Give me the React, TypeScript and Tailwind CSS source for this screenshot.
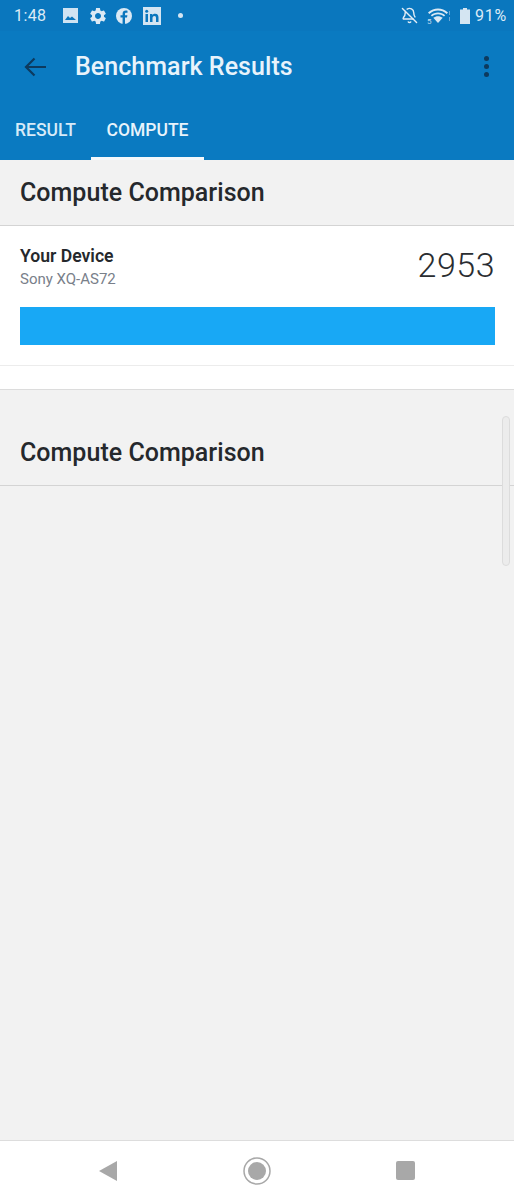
import React from "react";
import { BellOff } from "lucide-react";

const font = { fontFamily: "Roboto, sans-serif" };

function StatusIcons() {
  return (
    <div className="flex items-center">
      <svg width="15" height="15" viewBox="0 0 15 15" className="ml-[17px]" fill="#cfe3f2">
        <path d="M0 0h15v15H0z" />
        <path d="M2 12l3-4 2 2 2-1.500 4 3.500z" fill="#0a76bd" />
      </svg>
      <svg width="20" height="20" viewBox="0 0 24 24" className="ml-[10px]" fill="#dbe9f4">
        <path d="M19.140 12.940c.040-.300.060-.610.060-.940 0-.320-.020-.640-.070-.940l2.030-1.580a.490.490 0 00.120-.610l-1.920-3.320a.488.488 0 00-.590-.220l-2.390.960c-.500-.380-1.030-.700-1.620-.940l-.360-2.540a.484.484 0 00-.480-.410h-3.840c-.240 0-.430.170-.470.410l-.360 2.540c-.590.240-1.130.570-1.620.940l-2.390-.960c-.220-.080-.470 0-.590.220L2.740 8.870c-.120.210-.080.470.120.610l2.030 1.580c-.050.300-.090.630-.090.940s.020.640.070.940l-2.030 1.580a.490.490 0 00-.120.610l1.920 3.320c.120.220.370.290.590.220l2.390-.960c.500.380 1.030.700 1.620.940l.360 2.540c.050.240.240.410.480.410h3.840c.240 0 .440-.170.470-.410l.360-2.540c.590-.240 1.130-.560 1.620-.940l2.390.960c.220.080.470 0 .590-.220l1.920-3.320c.120-.220.070-.470-.120-.610l-2.010-1.580zM12 15.600c-1.980 0-3.600-1.620-3.600-3.600s1.620-3.600 3.600-3.600 3.600 1.620 3.600 3.600-1.620 3.600-3.600 3.600z" />
      </svg>
      <svg width="16" height="16" viewBox="0 0 16 16" className="ml-[8px]">
        <circle cx="8" cy="8" r="8" fill="#dbe9f4" />
        <path d="M9 16V9.500h2l.4-2.300H9V6c0-.8.300-1.200 1.200-1.200h1.300V2.700C11 2.600 10.400 2.500 9.800 2.500 7.900 2.500 6.600 3.700 6.600 5.700v1.500H4.500v2.300h2.100V16z" fill="#0a76bd" />
      </svg>
      <svg width="18" height="18" viewBox="0 0 18 18" className="ml-[11px]">
        <rect width="18" height="18" fill="#d4e5f2" />
        <rect x="2.500" y="7" width="2.500" height="8" fill="#0a76bd" />
        <circle cx="3.700" cy="4.200" r="1.500" fill="#0a76bd" />
        <path d="M7 7h2.400v1.200C10 7.300 11 6.800 12.200 6.800c2.300 0 3.300 1.400 3.300 3.800V15H13v-4c0-1.200-.4-2-1.500-2-1.200 0-2 .8-2 2.100V15H7z" fill="#0a76bd" />
      </svg>
      <span className="ml-[17px] h-[5px] w-[5px] rounded-full bg-[#d4e5f2]" />
    </div>
  );
}

function StatusRight() {
  return (
    <div className="flex items-center">
      <BellOff size={17} color="#e2edf6" strokeWidth={2} />
      <svg width="24" height="20" viewBox="0 0 24 20" className="ml-[9px]">
        <path d="M1 6.500C7 1 15 1 21 6.500L19.700 8C14.500 3.400 7.500 3.400 2.300 8z" fill="#dbe9f4" />
        <path d="M3.800 9.200C8 5.500 14 5.500 18.200 9.200L17 10.600C13.500 7.600 8.500 7.600 5 10.600z" fill="#dbe9f4" />
        <path d="M6.300 11.800C9 9.600 13 9.600 15.700 11.800L11 17z" fill="#dbe9f4" />
        <text x="0" y="18" fontSize="8" fill="#c6dcee" fontFamily="Roboto, sans-serif">5</text>
        <path d="M22.500 5v4M22.500 11v4" stroke="#6fa9d5" strokeWidth="1" />
      </svg>
      <svg width="10" height="16" viewBox="0 0 10 16" className="ml-[9px]">
        <path d="M3 0h4v1.500h3V16H0V1.500h3z" fill="#d4e5f2" />
      </svg>
      <span className="ml-[5px] text-[16px] leading-none tracking-[0.8px] text-[#dcebf6]">91%</span>
    </div>
  );
}

function SectionHeader({ className }: { className: string }) {
  return (
    <div className={`flex items-center border-b border-[#d4d4d4] px-5 ${className}`}>
      <h2 className="text-[25px] font-medium leading-none tracking-[0.03px] text-[#25282c]">Compute Comparison</h2>
    </div>
  );
}

export default function App() {
  return (
    <div className="relative flex h-[1200px] w-[514px] flex-col overflow-hidden bg-[#f2f2f2]" style={font}>
      <header className="flex h-[160px] flex-col bg-[#0a7ac1]">
        <div className="flex h-[31px] items-center justify-between bg-[#0a77be] pl-[14px] pr-[7px]">
          <div className="flex items-center">
            <span className="text-[16px] leading-none tracking-[0.4px] text-[#dcebf6]">1:48</span>
            <StatusIcons />
          </div>
          <StatusRight />
        </div>
        <div className="flex h-[71px] items-center pl-[24px] pr-[25px]">
          <svg width="22" height="20" viewBox="0 0 22 20" fill="none" stroke="#0d3a5e" strokeWidth="2.200">
            <path d="M22 10H2M10.500 1.500L2 10l8.500 8.500" />
          </svg>
          <h1 className="ml-[29px] flex-1 text-[25px] font-medium leading-none tracking-[0.05px] text-[#e8f3fb]">Benchmark Results</h1>
          <div className="flex flex-col gap-[3px]">
            <span className="h-[5px] w-[5px] rounded-full bg-[#0d3a5e]" />
            <span className="h-[5px] w-[5px] rounded-full bg-[#0d3a5e]" />
            <span className="h-[5px] w-[5px] rounded-full bg-[#0d3a5e]" />
          </div>
        </div>
        <nav className="flex h-[58px] text-[17.500px] font-medium leading-none text-[#d7eaf8]">
          <div className="flex w-[91px] items-center justify-center">RESULT</div>
          <div className="flex w-[113px] items-center justify-center border-b-[3px] border-[#f4f8fb] pt-[3px] text-[#e8f3fb]">COMPUTE</div>
        </nav>
      </header>

      <SectionHeader className="h-[66px]" />

      <section className="border-b border-[#dcdcdc] bg-white">
        <div className="border-b border-[#ececec] pl-5 pr-[19px] pt-[19px]">
          <div className="flex items-start justify-between">
            <div>
              <div className="text-[17.600px] font-semibold leading-[22px] text-[#25282c]">Your Device</div>
              <div className="mt-[1px] text-[15px] leading-[22px] text-[#79808a]">Sony XQ-AS72</div>
            </div>
            <div className="mt-[1px] text-[34px] font-light leading-[38px] tracking-[0.5px] text-[#2a2d31]">2953</div>
          </div>
          <div className="mb-[20px] mt-[17px] h-[38px] bg-[#18a8f5]" />
        </div>
        <div className="h-[23px]" />
      </section>

      <SectionHeader className="mt-[30px] h-[66px]" />

      <main className="flex-1" />

      <footer className="flex h-[60px] items-center justify-center border-t border-[#dddddd] bg-white">
        <div className="flex w-[316px] items-center justify-between">
          <svg width="18" height="22" viewBox="0 0 18 22" fill="#a8a8a8"><path d="M18 1v20L0 11z" /></svg>
          <svg width="28" height="28" viewBox="0 0 28 28" className="ml-[1px]">
            <circle cx="14" cy="14" r="13" fill="none" stroke="#a8a8a8" strokeWidth="1.500" />
            <circle cx="14" cy="14" r="9" fill="#a8a8a8" />
          </svg>
          <span className="h-[19px] w-[19px] rounded-[2px] bg-[#a8a8a8]" />
        </div>
      </footer>

      <div className="absolute left-[502px] top-[416px] h-[150px] w-[8px] rounded-full border border-[#dcdcdc] bg-[#ececec]" />
    </div>
  );
}
